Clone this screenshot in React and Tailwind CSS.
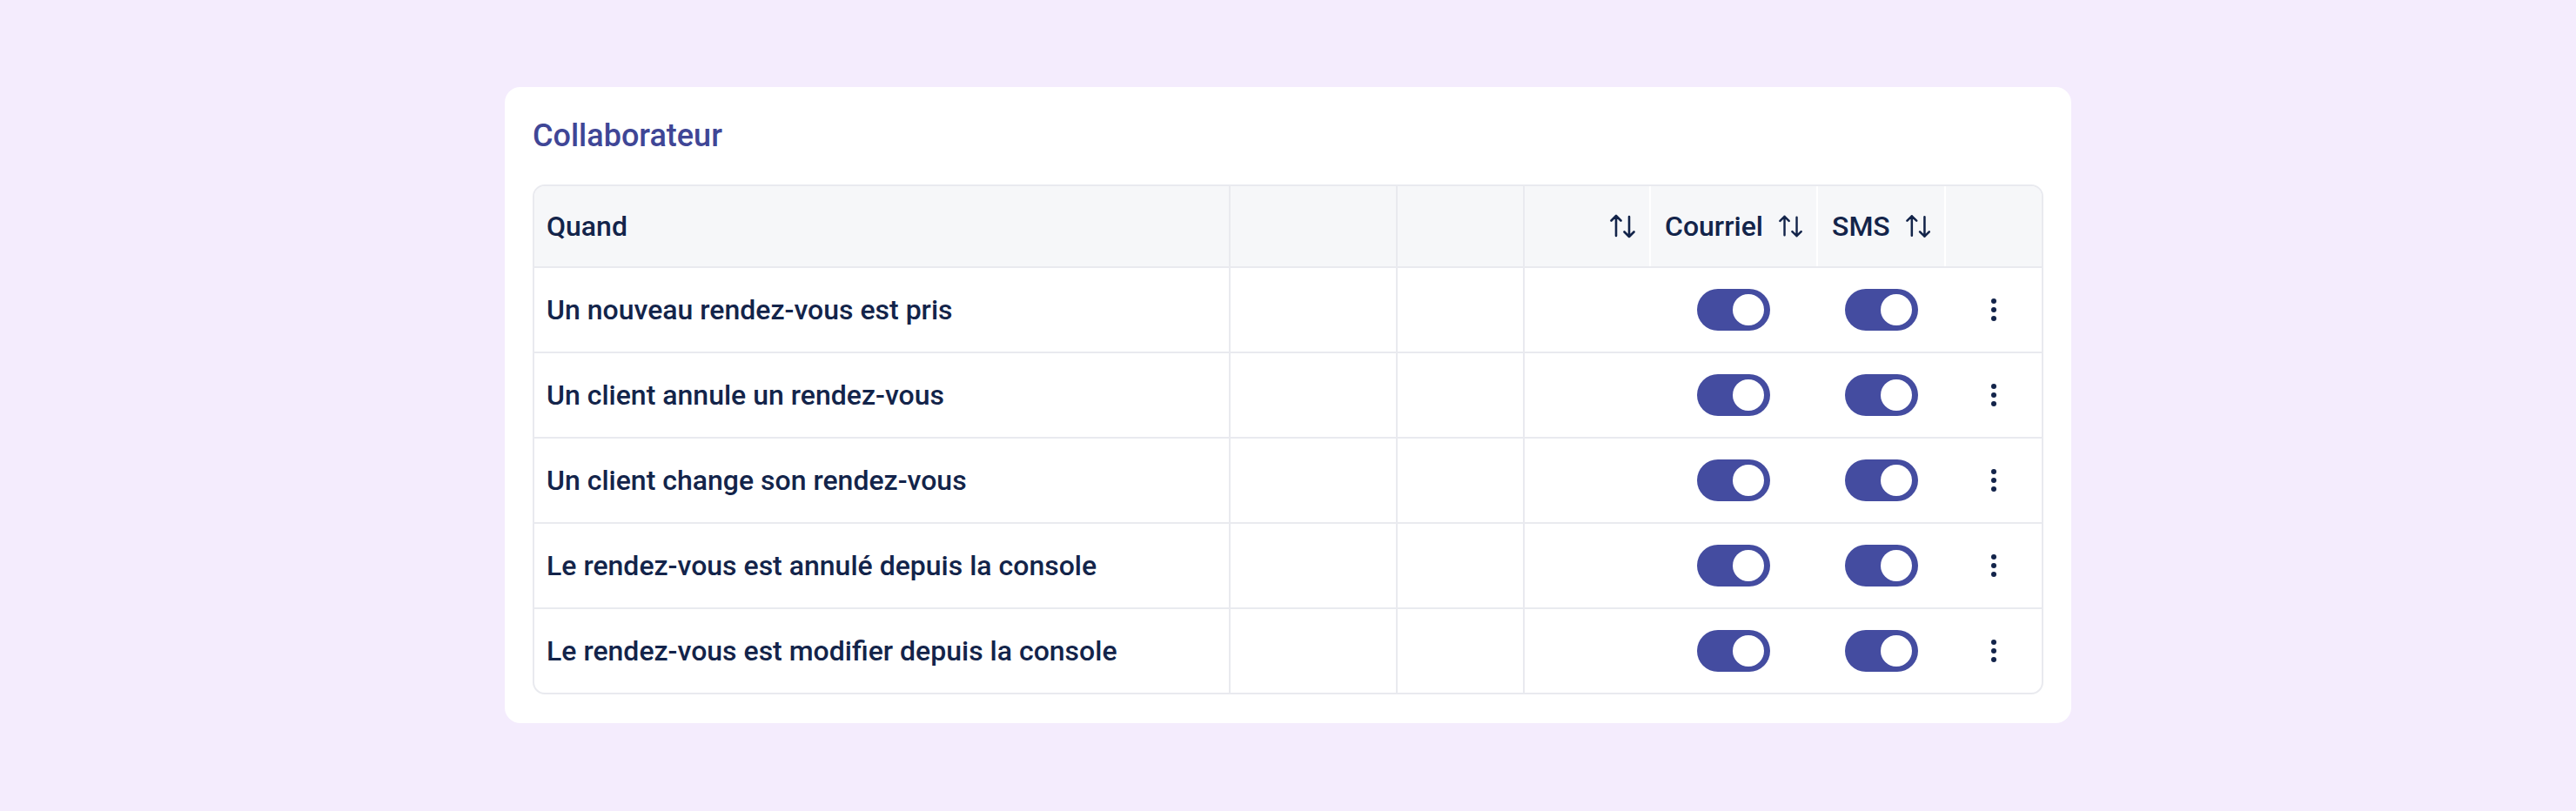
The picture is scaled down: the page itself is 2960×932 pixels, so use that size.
import React from 'react';

const rows = [
  'Un nouveau rendez-vous est pris',
  'Un client annule un rendez-vous',
  'Un client change son rendez-vous',
  'Le rendez-vous est annulé depuis la console',
  'Le rendez-vous est modifier depuis la console',
];

// small up/down arrow pair used on sortable headers
const SortIcon = () => (
  <svg width="29" height="28" viewBox="0 0 29 28" fill="none" stroke="#13244a" strokeWidth="2.6" strokeLinecap="round" strokeLinejoin="round">
    <path d="M7 25V2M1.5 7.5L7 2l5.5 5.5" />
    <path d="M22 3v23M16.5 20.5L22 26l5.5-5.5" />
  </svg>
);

const Toggle = () => (
  <div className="w-[84px] h-[48px] rounded-full bg-[#444ca0] flex items-center justify-end pr-[7px]">
    <div className="w-[36px] h-[36px] rounded-full bg-white" />
  </div>
);

const Kebab = () => (
  <div className="flex flex-col items-center gap-[4.5px]">
    <span className="w-[5.5px] h-[5.5px] rounded-full bg-[#13244a]" />
    <span className="w-[5.5px] h-[5.5px] rounded-full bg-[#13244a]" />
    <span className="w-[5.5px] h-[5.5px] rounded-full bg-[#13244a]" />
  </div>
);

const App = () => {
  return (
    <div className="min-h-screen w-full bg-[#f4ecfd] flex justify-center pt-[100px]" style={{ fontFamily: 'Roboto, "Noto Sans", sans-serif' }}>
      <div className="w-[1800px] h-[731px] bg-white rounded-[18px] p-8">
        <h2 className="text-[36px] leading-[48px] font-medium text-[#3f4696] mb-8">Collaborateur</h2>

        <div className="border-2 border-[#e9eaef] rounded-[14px] overflow-hidden text-[#13244a] text-[32px] font-medium">
          <div className="grid grid-cols-[800px_192px_146px_145px_192px_147px_1fr] bg-[#f6f7f9] h-[94px] border-b-2 border-[#e9eaef]">
            <div className="flex items-center px-[14px] border-r-2 border-[#e9eaef]">Quand</div>
            <div className="border-r-2 border-[#e9eaef]" />
            <div className="border-r-2 border-[#e9eaef]" />
            <div className="flex items-center justify-end px-4 border-r-2 border-white">
              <SortIcon />
            </div>
            <div className="flex items-center justify-end gap-[18px] px-4 border-r-2 border-white">
              <span>Courriel</span>
              <SortIcon />
            </div>
            <div className="flex items-center justify-end gap-[18px] px-4 border-r-2 border-white">
              <span>SMS</span>
              <SortIcon />
            </div>
            <div />
          </div>

          {rows.map((label, i) => (
            <div
              key={label}
              className={
                i < rows.length - 1
                  ? 'grid grid-cols-[800px_192px_146px_145px_192px_147px_1fr] h-[98px] border-b-2 border-[#e9eaef]'
                  : 'grid grid-cols-[800px_192px_146px_145px_192px_147px_1fr] h-[96px]'
              }
            >
              <div className="flex items-center px-[14px] border-r-2 border-[#e9eaef]">{label}</div>
              <div className="border-r-2 border-[#e9eaef]" />
              <div className="border-r-2 border-[#e9eaef]" />
              <div className="border-r-2 border-white" />
              <div className="flex items-center justify-center border-r-2 border-white">
                <Toggle />
              </div>
              <div className="flex items-center justify-center border-r-2 border-white">
                <Toggle />
              </div>
              <div className="flex items-center justify-center">
                <Kebab />
              </div>
            </div>
          ))}
        </div>
      </div>
    </div>
  );
};

export default App;
